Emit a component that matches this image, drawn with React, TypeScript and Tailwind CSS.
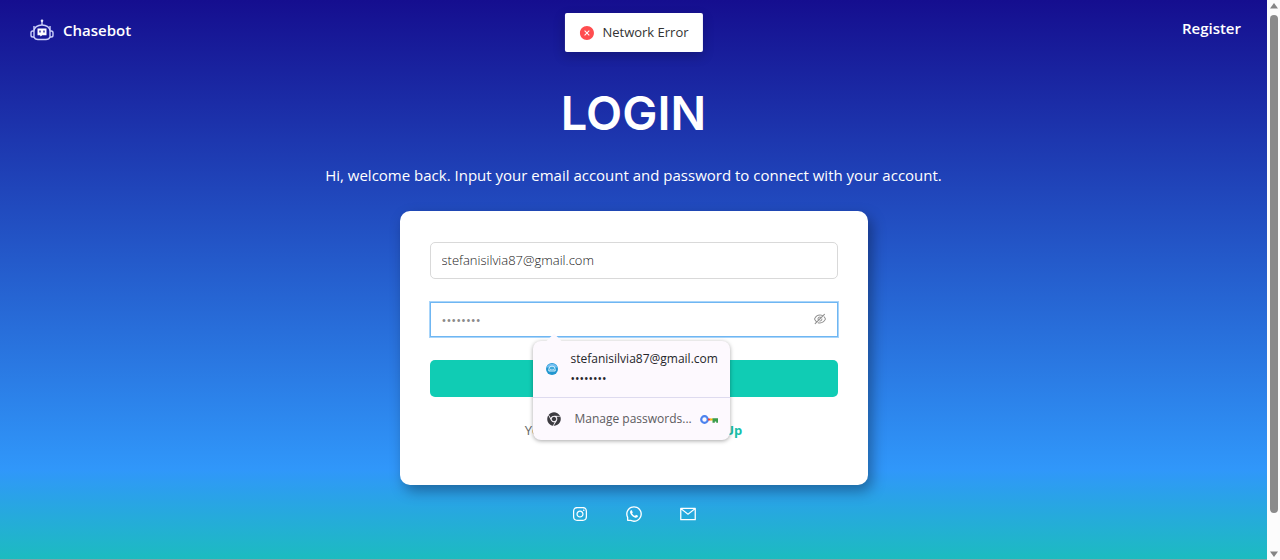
import React, { useState } from 'react';
import {
  AiFillCloseCircle,
  AiOutlineEyeInvisible,
  AiOutlineInstagram,
  AiOutlineMail,
  AiOutlineWhatsApp,
} from 'react-icons/ai';
import { FaChrome } from 'react-icons/fa';

function RobotIcon() {
  return (
    <svg viewBox="0 0 24 22" className="w-6 h-[22px]" fill="none" stroke="#ccd0fb" strokeWidth="1.4">
      <path d="M12 6V2M4 11V7M20 11V7" />
      <circle cx="12" cy="1.8" r="1.3" fill="#e8eaff" stroke="none" />
      <path d="M4 18V12C4 8.5 7.500 6 12 6s8 2.500 8 6v6c-.6 1.800-2 2.500-4 2.500H8c-2 0-3.400-.7-4-2.500z" />
      <path d="M4 12H2.800C1.500 12 1 12.800 1 13.800v2.400c0 1.100.5 1.800 1.800 1.800H4M20 12h1.200c1.300 0 1.800.8 1.800 1.800v2.400c0 1.100-.5 1.800-1.800 1.800H20" />
      <path d="M7.500 9.500h9v6.800h-4.300l-1.500 1.200-.7-1.200H7.500z" fill="#fff" stroke="none" />
      <path d="M10 11.500v2M14 11.500v2" stroke="#1a1a99" strokeWidth="1.300" />
    </svg>
  );
}

function SiteIcon() {
  return (
    <svg viewBox="0 0 12 12" className="w-3 h-3" fill="none">
      <circle cx="6" cy="6" r="6" fill="#2196cf" />
      <path d="M.4 4.500a6 6 0 0 1 11.200 0z" fill="#70bdf2" />
      <path d="M2.800 8V6.300a3.200 3.200 0 0 1 6.400 0V8z" fill="#3fa9dc" stroke="#e2f6ff" strokeWidth=".9" />
      <path d="M4.900 6v1M7.100 6v1" stroke="#fff" strokeWidth=".9" />
    </svg>
  );
}

function KeyIcon() {
  return (
    <svg viewBox="0 0 18 9" className="w-[18px] h-[9px]" fill="none">
      <circle cx="4.500" cy="4.500" r="3.300" stroke="#4c82ee" strokeWidth="2.200" />
      <path d="M8 3.500h2.500v2H8z" fill="#ea4335" />
      <path d="M10.200 3.500h2.600v2h-2.600z" fill="#fbbc04" />
      <path d="M12.500 3.200H18v4.600h-1.800V6.500h-1.400v1.300h-2.300z" fill="#3a9c4b" />
    </svg>
  );
}

// browser suggestion under the password field
function PasswordPopup() {
  return (
    <div className="absolute top-[39px] left-[103px] z-10 w-[197px] rounded-lg bg-[#fdf9fe] shadow-[0_1px_4px_rgba(0,0,0,0.35)]">
      <div className="absolute -top-[5px] left-[15px] w-3 h-3 rotate-45 bg-[#fdf9fe]" />
      <div className="relative flex items-center h-[57px] pl-[13px] gap-[13px] border-b border-[#dedbef]">
        <SiteIcon />
        <div className="text-[#26262a] text-[12px] leading-5 font-medium">
          <div>stefanisilvia87@gmail.com</div>
          <div>••••••••</div>
        </div>
      </div>
      <button type="button" className="flex items-center w-full h-[42px] pl-[14px] pr-3 text-[12px] text-[#5c5b60]">
        <FaChrome className="w-[14px] h-[14px] mr-[14px] text-[#3c3b40]" />
        <span className="mr-auto">Manage passwords...</span>
        <KeyIcon />
      </button>
    </div>
  );
}

function ScrollBar() {
  return (
    <div className="sticky top-0 flex flex-col items-center justify-between shrink-0 w-[13px] h-screen py-[3px] bg-[#fcfcfc]">
      <svg viewBox="0 0 8 6" className="w-2 h-[6px] fill-[#858585]"><path d="M4 0l4 5.500H0z" /></svg>
      <div className="grow mt-[6px] mb-[38px] w-2 rounded-full bg-[#8b8b8b]" />
      <svg viewBox="0 0 8 6" className="w-2 h-[6px] fill-[#858585]"><path d="M0 .5h8L4 6z" /></svg>
    </div>
  );
}

export default function App() {
  const [email, setEmail] = useState('stefanisilvia87@gmail.com');
  const [password, setPassword] = useState('password');

  return (
    <div className="flex min-h-screen font-['Open_Sans',sans-serif]">
      <div className="relative flex flex-col grow border-b border-[#7fa3a8] bg-[linear-gradient(180deg,#150e8f_0%,#3097fa_84%,#1cbcc0_100%)] text-white">
        {/* Toast */}
        <div role="alert" className="absolute top-[13px] left-1/2 -translate-x-1/2 flex items-center gap-2 h-[39px] px-[14px] rounded-xs bg-white text-[13px] text-[#333] whitespace-nowrap shadow-[0_4px_12px_rgba(0,0,0,0.2)]">
          <AiFillCloseCircle className="w-4 h-4 text-[#ff4d4f]" />
          Network Error
        </div>

        {/* Header */}
        <header className="flex justify-between h-[60px] pl-[30px] pr-[26px] font-semibold text-[15px]">
          <a href="#home" className="flex items-center gap-[9px]">
            <RobotIcon />
            Chasebot
          </a>
          <a href="#register" className="pt-4 leading-6">Register</a>
        </header>

        <main className="flex flex-col items-center px-4">
          <h1 className="mt-[25px] font-['Inter',sans-serif] font-semibold text-[47px] leading-[56px]">LOGIN</h1>
          <p className="mt-[22px] text-[15px] leading-6 text-center">
            Hi, welcome back. Input your email account and password to connect with your account.
          </p>

          {/* Login form */}
          <form className="w-full max-w-[468px] mt-6 px-[30px] pt-[31px] pb-[43px] rounded-[10px] bg-white shadow-[4px_6px_14px_rgba(0,0,0,0.35)]" onSubmit={(e) => e.preventDefault()}>
            <input
              type="email"
              aria-label="Email"
              value={email}
              onChange={(e) => setEmail(e.target.value)}
              className="block w-full h-[37px] px-[11px] pb-[2px] rounded-[5px] border border-[#d9d9d9] text-[13px] font-light text-[#222] outline-none"
            />
            <div className="relative mt-[23px]">
              <input
                type="password"
                aria-label="Password"
                value={password}
                onChange={(e) => setPassword(e.target.value)}
                className="block w-full h-[35px] px-[11px] border border-[#6fb6f2] text-[13px] text-[#8a8a8a] outline-none shadow-[0_0_0_1px_#a9d5fa]"
              />
              <button type="button" aria-label="Show password" className="absolute top-[10px] right-[11px]">
                <AiOutlineEyeInvisible className="w-[14px] h-[14px] text-[#8f8f8f]" />
              </button>
              <PasswordPopup />
            </div>
            <button type="submit" className="block w-full h-[37px] mt-[23px] rounded-[5px] bg-[#10ccb4] text-[15px] font-semibold">
              Login
            </button>
            <p className="mt-[21px] text-center text-[13px] leading-6 text-[#666]">
              You don't have an account? <a href="#signup" className="font-bold text-[#18bfa8]">Sign Up</a>
            </p>
          </form>
        </main>

        <footer className="flex justify-center gap-9 pt-5 pb-9">
          <a href="#instagram" aria-label="Instagram"><AiOutlineInstagram className="w-[18px] h-[18px]" /></a>
          <a href="#whatsapp" aria-label="WhatsApp"><AiOutlineWhatsApp className="w-[18px] h-[18px]" /></a>
          <a href="#mail" aria-label="Mail"><AiOutlineMail className="w-[18px] h-[18px]" /></a>
        </footer>
      </div>
      <ScrollBar />
    </div>
  );
}
